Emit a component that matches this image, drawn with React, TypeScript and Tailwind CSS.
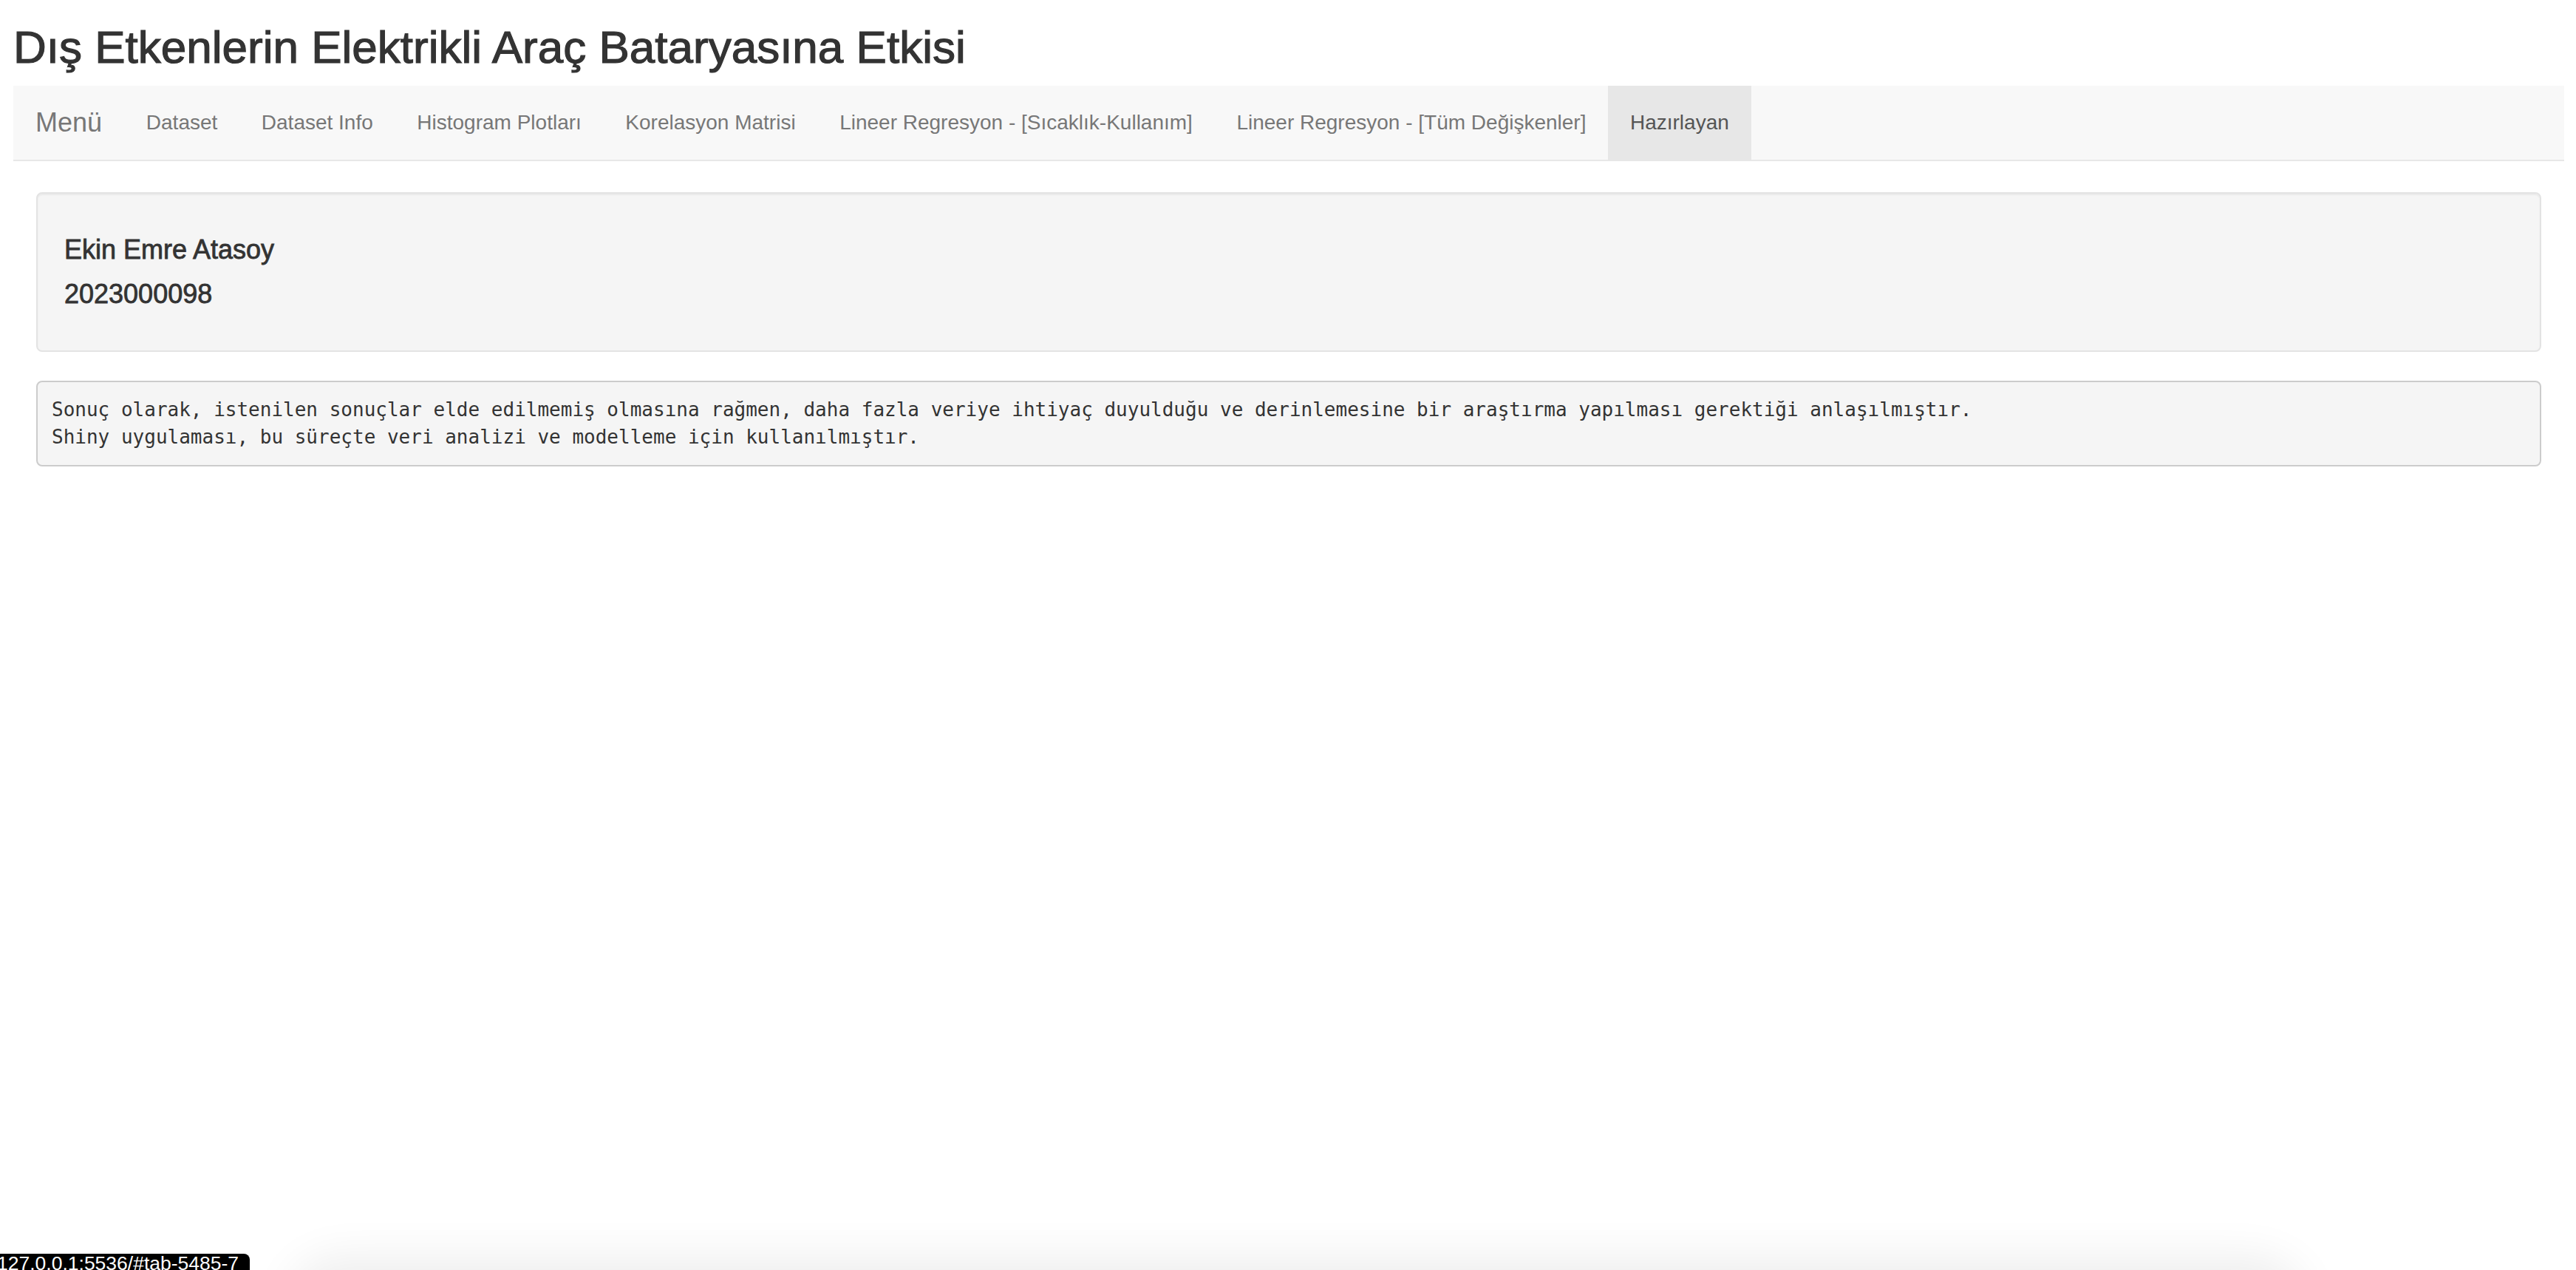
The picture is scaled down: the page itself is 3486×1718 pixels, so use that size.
const TABS = [
  'Dataset',
  'Dataset Info',
  'Histogram Plotları',
  'Korelasyon Matrisi',
  'Lineer Regresyon - [Sıcaklık-Kullanım]',
  'Lineer Regresyon - [Tüm Değişkenler]',
  'Hazırlayan',
];

const ACTIVE = 'Hazırlayan';

const RESULT_TEXT =
  'Sonuç olarak, istenilen sonuçlar elde edilmemiş olmasına rağmen, daha fazla veriye ihtiyaç duyulduğu ve derinlemesine bir araştırma yapılması gerektiği anlaşılmıştır.\nShiny uygulaması, bu süreçte veri analizi ve modelleme için kullanılmıştır.';

export default function App() {
  return (
    <div className="relative h-[1718px] w-full overflow-hidden bg-white text-[#333] font-['Liberation_Sans',Arial,sans-serif]">
      <div className="ml-[18px] mr-[16px]">
        {/* Title */}
        <h2 className="mt-[31px] mb-[19px] text-[62px] leading-[66px] font-medium [-webkit-text-stroke:1.2px_#333]">
          Dış Etkenlerin Elektrikli Araç Bataryasına Etkisi
        </h2>

        {/* Navbar */}
        <nav className="flex h-[102px] items-stretch border-b-2 border-[#e7e7e7] bg-[#f8f8f8]">
          <span className="px-[30px] py-[30px] text-[36px] leading-[40px] text-[#777]">Menü</span>
          {TABS.map((tab) => (
            <a
              key={tab}
              href="#"
              className={
                tab === ACTIVE
                  ? 'px-[29.75px] py-[30px] text-[28px] leading-[40px] text-[#555] bg-[#e7e7e7] whitespace-nowrap'
                  : 'px-[29.75px] py-[30px] text-[28px] leading-[40px] text-[#777] whitespace-nowrap'
              }
            >
              {tab}
            </a>
          ))}
        </nav>

        {/* Content */}
        <div className="px-[31px] pt-[42px]">
          <div className="rounded-[8px] border-2 border-[#e3e3e3] bg-[#f5f5f5] p-[36px] shadow-[inset_0_2px_2px_rgba(0,0,0,0.05)]">
            <h4 className="mt-[20px] mb-[20px] text-[36px] leading-[40px] font-medium [-webkit-text-stroke:0.8px_#333]">
              Ekin Emre Atasoy
            </h4>
            <h4 className="mb-[20px] text-[36px] leading-[40px] font-medium [-webkit-text-stroke:0.8px_#333]">
              2023000098
            </h4>
          </div>

          <pre className="mt-[39px] whitespace-pre-wrap rounded-[8px] border-2 border-[#ccc] bg-[#f5f5f5] p-[19px] text-[26px] leading-[37px] text-[#333] font-['DejaVu_Sans_Mono',monospace]">
            {RESULT_TEXT}
          </pre>
        </div>
      </div>

      {/* Browser overlays at the bottom edge */}
      <div className="absolute left-[430px] top-[1740px] h-[60px] w-[2650px] rounded-[40px] bg-[#e8e8e8] shadow-[0_0_60px_40px_rgba(0,0,0,0.07)]" />
      <div className="absolute left-0 top-[1696px] h-[40px] w-[338px] overflow-hidden rounded-tr-[8px] bg-black">
        <span className="block -ml-[4px] text-[26.5px] leading-[26px] text-white whitespace-nowrap">
          127.0.0.1:5536/#tab-5485-7
        </span>
      </div>
    </div>
  );
}
